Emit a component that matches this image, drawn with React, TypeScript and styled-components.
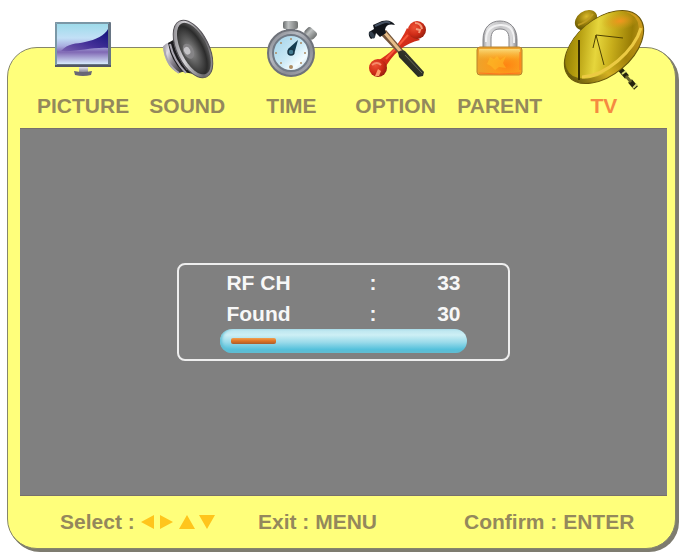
import React from "react";
import styled, { createGlobalStyle } from "styled-components";

const GlobalStyle = createGlobalStyle`
  *, *::before, *::after { box-sizing: border-box; }
  body {
    margin: 0;
    background: #ffffff;
    font-family: "Liberation Sans", Arial, sans-serif;
    font-size: 21px;
    line-height: 24px;
    font-weight: 700;
    color: #94885c;
  }
`;

const Page = styled.div`
  display: flex;
  flex-direction: column;
  min-height: 100vh;
  padding: 47px 9px 5px 7px;
`;

const Panel = styled.main`
  flex: 1;
  display: flex;
  flex-direction: column;
  padding: 0 8px 0 12px;
  border: 1px solid #86866a;
  border-radius: 30px;
  background: #ffff7b;
  box-shadow: 1px 1px 0 #7e7c70, 2px 2px 0 #7e7c70, 3px 3px 0 #7e7c70;
`;

const Tabs = styled.nav`
  display: grid;
  grid-template-columns: repeat(6, 1fr);
  margin-top: -48px;
  padding: 0 11px 10px;
`;

const Tab = styled.button<{ $active?: boolean }>`
  display: flex;
  flex-direction: column;
  align-items: center;
  min-width: 0;
  padding: 0;
  border: 0;
  background: none;
  font: inherit;
  color: ${({ $active }) => ($active ? "#f58a42" : "inherit")};
  cursor: pointer;
`;

const Icon = styled.svg`
  display: block;
  width: 104px;
  height: 94px;
`;

const Screen = styled.section`
  flex: 1;
  display: flex;
  align-items: center;
  justify-content: center;
  padding: 16px;
  background: #808080;
  box-shadow: inset 0 1px 0 #77706c, inset 0 -1px 0 #77706c;
`;

const ScanBox = styled.div`
  width: 54%;
  min-width: 300px;
  max-width: 333px;
  padding: 2px 41px 6px;
  border: 2px solid #eeeeee;
  border-radius: 8px;
  color: #f7f7f7;
`;

const ScanTable = styled.table`
  width: 100%;
  border-collapse: collapse;
  table-layout: fixed;
`;

const Name = styled.th`
  width: 56%;
  height: 31px;
  padding: 0 0 0 6px;
  text-align: left;
`;

const Colon = styled.td`
  width: 12%;
  padding: 0;
  text-align: center;
`;

const Value = styled.td`
  padding: 0 6px 0 0;
  text-align: right;
`;

const Track = styled.div`
  display: flex;
  align-items: center;
  height: 24px;
  padding: 0 11px;
  border-radius: 12px;
  background: linear-gradient(#b9e4ee, #cdeff5 25%, #9adbea 55%, #55c1dc 85%, #62b9ce);
  box-shadow: inset 2px -1px 3px #5fbed4;
`;

const Fill = styled.div`
  height: 6px;
  border-radius: 2px;
  background: linear-gradient(#f0a052, #df7424 50%, #a95d2c);
`;

const Hints = styled.footer`
  display: grid;
  grid-template-columns: 198fr 206fr 203fr;
  padding: 14px 0 14px 40px;
`;

const Hint = styled.div`
  display: flex;
  align-items: center;
  gap: 6px;
  white-space: nowrap;
`;

const Arrows = styled.svg`
  width: 74px;
  height: 16px;
`;

const PictureIcon = () => (
  <Icon viewBox="31 0 104 94" aria-hidden="true">
    <defs>
      <linearGradient id="lcd" x1="0" y1="0" x2="0" y2="1">
        <stop offset="0" stopColor="#9edbea" />
        <stop offset=".35" stopColor="#c2e0f6" />
        <stop offset=".55" stopColor="#a9aee0" />
        <stop offset=".7" stopColor="#8068b4" />
        <stop offset="1" stopColor="#d8eafc" />
      </linearGradient>
      <linearGradient id="wave" x1="0" y1="1" x2="1" y2="0">
        <stop offset="0" stopColor="#7a62b0" />
        <stop offset=".45" stopColor="#443098" />
        <stop offset="1" stopColor="#11127c" />
      </linearGradient>
      <linearGradient id="stand" x1="0" y1="0" x2="0" y2="1">
        <stop offset="0" stopColor="#e5e3ec" />
        <stop offset="1" stopColor="#8c8a98" />
      </linearGradient>
    </defs>
    <path d="M79 67h9v5h-9z" fill="url(#stand)" />
    <path d="M74 71q9 2 18 0l-1 4q-8 2-16 0z" fill="#696775" />
    <rect x="55" y="22" width="56" height="45" rx="1" fill="#677584" />
    <rect x="57" y="24" width="51" height="40" fill="url(#lcd)" />
    <path d="M61 51C68 43 76 44 85 42C96 40 105 35 108 29V48C92 47 78 52 61 51Z" fill="url(#wave)" />
    <path d="M56 65V23H109" fill="none" stroke="#8fbbc9" />
    <path d="M55 66H111" stroke="#535664" strokeWidth="2" />
  </Icon>
);

const SoundIcon = () => (
  <Icon viewBox="135 0 104 94" aria-hidden="true">
    <defs>
      <linearGradient id="magnet" x1="0" y1="0" x2="1" y2=".6">
        <stop offset="0" stopColor="#8c8892" />
        <stop offset=".3" stopColor="#dedbe3" />
        <stop offset=".6" stopColor="#89848e" />
        <stop offset="1" stopColor="#3b393e" />
      </linearGradient>
      <radialGradient id="cone" cx=".35" cy=".52" r=".6">
        <stop offset="0" stopColor="#8f8f8f" />
        <stop offset=".45" stopColor="#565656" />
        <stop offset=".8" stopColor="#2b2b2b" />
        <stop offset="1" stopColor="#4e4e4e" />
      </radialGradient>
      <linearGradient id="rim" x1="0" y1="0" x2="1" y2="1">
        <stop offset="0" stopColor="#67656a" />
        <stop offset=".35" stopColor="#d5d3d7" />
        <stop offset=".7" stopColor="#68676a" />
        <stop offset="1" stopColor="#b5b3b8" />
      </linearGradient>
    </defs>
    <path d="M163 47q2-4 8-5l14 29-6 2q-14-6-16-26z" fill="url(#magnet)" />
    <path d="M168 43l7-4 19 35-11-2q-12-11-15-29z" fill="#1c1b1e" />
    <path d="M164 46q1 18 15 27M170 44q4 17 16 29" fill="none" stroke="#aaa6b0" strokeWidth="2" />
    <path d="M174 43q3 14 13 27" fill="none" stroke="#6b6870" />
    <g transform="rotate(-26 193 49)">
      <ellipse cx="193" cy="49" rx="16" ry="31" fill="url(#rim)" stroke="#555257" />
      <ellipse cx="194" cy="49" rx="13" ry="28" fill="url(#cone)" />
      <ellipse cx="188" cy="49" rx="5" ry="8" fill="#858486" />
      <ellipse cx="187" cy="48" rx="3" ry="4" fill="#c4c3c6" />
    </g>
  </Icon>
);

const TimeIcon = () => (
  <Icon viewBox="239 0 104 94" aria-hidden="true">
    <defs>
      <linearGradient id="steel" x1="0" y1="0" x2="1" y2="1">
        <stop offset="0" stopColor="#777981" />
        <stop offset=".35" stopColor="#b6b9c0" />
        <stop offset=".65" stopColor="#8a8d96" />
        <stop offset="1" stopColor="#b2b3ba" />
      </linearGradient>
      <linearGradient id="dial" x1="0" y1="0" x2="1" y2="1">
        <stop offset="0" stopColor="#9fd0e8" />
        <stop offset=".5" stopColor="#c9e8f5" />
        <stop offset=".75" stopColor="#f3fcff" />
        <stop offset="1" stopColor="#accfdf" />
      </linearGradient>
      <linearGradient id="crown" x1="0" y1="0" x2="1" y2="0">
        <stop offset="0" stopColor="#686b6c" />
        <stop offset=".35" stopColor="#bec1c1" />
        <stop offset="1" stopColor="#707372" />
      </linearGradient>
    </defs>
    <rect x="286" y="27" width="9" height="7" fill="#7b7e82" />
    <rect x="283" y="21" width="15" height="8" rx="2" fill="url(#crown)" />
    <path d="M302 39l5-7 4 5-6 6z" fill="#8b8f94" />
    <rect x="305" y="29" width="12" height="9" rx="3" transform="rotate(43 311 33)" fill="url(#crown)" />
    <circle cx="291" cy="53" r="23" fill="url(#steel)" stroke="#6f727a" strokeWidth="2" />
    <circle cx="291" cy="53" r="18" fill="url(#dial)" stroke="#717a86" strokeWidth="2" />
    <g fill="#ad8d65">
      <circle cx="291" cy="39" r="1" /><circle cx="305" cy="53" r="1" />
      <circle cx="291" cy="67" r="2" /><circle cx="276" cy="53" r="1" />
      <circle cx="281" cy="43" r="1" /><circle cx="281" cy="63" r="1" />
      <circle cx="301" cy="63" r="1" /><circle cx="301" cy="43" r="1" />
    </g>
    <path d="M288 49L298 40 295 51 291 55z" fill="#143d51" />
    <circle cx="291" cy="52" r="3" fill="#437b91" stroke="#173647" strokeWidth="1.5" />
  </Icon>
);

const OptionIcon = () => (
  <Icon viewBox="343 0 104 94" aria-hidden="true">
    <defs>
      <linearGradient id="wrench" x1="0" y1="0" x2="1" y2="1">
        <stop offset="0" stopColor="#f0452b" />
        <stop offset=".5" stopColor="#d42d19" />
        <stop offset="1" stopColor="#a5200f" />
      </linearGradient>
      <radialGradient id="knob" cx=".35" cy=".35" r=".7">
        <stop offset="0" stopColor="#ee5234" />
        <stop offset=".6" stopColor="#cf2c17" />
        <stop offset="1" stopColor="#96200f" />
      </radialGradient>
      <linearGradient id="grip" x1="0" y1="1" x2="1" y2="0">
        <stop offset="0" stopColor="#191b14" />
        <stop offset=".6" stopColor="#33352a" />
        <stop offset="1" stopColor="#77755b" />
      </linearGradient>
    </defs>
    <path d="M376 61C388 55 399 44 406 28L419 40C404 43 391 54 383 70Z" fill="url(#wrench)" />
    <circle cx="416" cy="30" r="9" fill="url(#knob)" />
    <circle cx="377" cy="68" r="9" fill="url(#knob)" />
    <path d="M407 35L385 59" stroke="#f8583a" strokeWidth="2" />
    <path d="M414 23q6 0 7 6M415 29l4 1-1 3" fill="none" stroke="#f49a7a" strokeWidth="2" />
    <path d="M371 65q5-4 9 0" fill="none" stroke="#f58a69" strokeWidth="2" />
    <path d="M377 69l3 2-2 5h-4z" fill="#ff9c69" />
    <path d="M379 34l6-4 18 21-4 4z" fill="#74553a" />
    <path d="M384 33l17 20" stroke="#e6bd88" strokeWidth="3" />
    <path d="M397 52q4-3 7-1l19 21-1 4-5 1-19-20z" fill="url(#grip)" />
    <path d="M404 55l17 18" stroke="#6b6c57" />
    <path d="M368 32l5-3-1-4 9-4q9-2 13 4-9-2-10 5l1 3-6 4-4-4-1 4-4 2q-3-3-2-7z" fill="#11151b" />
    <path d="M374 26l7-3q5-2 8 0" fill="none" stroke="#465263" strokeWidth="2" />
    <ellipse cx="371" cy="35" rx="2" ry="4" transform="rotate(-35 371 35)" fill="#34404d" />
  </Icon>
);

const ParentIcon = () => (
  <Icon viewBox="448 0 104 94" aria-hidden="true">
    <defs>
      <linearGradient id="shackle" x1="0" y1="0" x2="1" y2="0">
        <stop offset="0" stopColor="#9a9a9d" />
        <stop offset=".12" stopColor="#dededf" />
        <stop offset=".5" stopColor="#c4c4c6" />
        <stop offset=".85" stopColor="#d8d8da" />
        <stop offset="1" stopColor="#858589" />
      </linearGradient>
      <radialGradient id="lock" cx=".65" cy=".65" r=".65">
        <stop offset="0" stopColor="#ff8412" />
        <stop offset=".5" stopColor="#fb9c1c" />
        <stop offset="1" stopColor="#eda32c" />
      </radialGradient>
      <linearGradient id="shine" x1="0" y1="0" x2="0" y2="1">
        <stop offset="0" stopColor="#fbe083" stopOpacity=".9" />
        <stop offset="1" stopColor="#ffbd36" stopOpacity="0" />
      </linearGradient>
    </defs>
    <path fillRule="evenodd" d="M483 48V40C483 28 490 21 500 21S517 28 517 40V48H509V39C509 32 506 29 500 29S491 32 491 39V48Z" fill="url(#shackle)" stroke="#858589" />
    <path d="M486 42V38q1-12 14-13t14 13v5" fill="none" stroke="#f1f1f2" strokeWidth="2" />
    <rect x="477" y="47" width="45" height="28" rx="3" fill="url(#lock)" stroke="#b9822d" />
    <rect x="479" y="49" width="41" height="11" rx="1" fill="url(#shine)" />
    <path d="M479 73q20 2 41 0M520 52v18" fill="none" stroke="#ff7720" />
    <path d="M487 64l3-7 4 2 3-3 3 4 6-4-3 7 3 5-7-1-4 3-4-4z" fill="#ffc52b" opacity=".45" />
  </Icon>
);

const TvIcon = () => (
  <Icon viewBox="552 0 104 94" aria-hidden="true">
    <defs>
      <linearGradient id="dish" x1="0" y1=".2" x2="1" y2=".8">
        <stop offset="0" stopColor="#857400" />
        <stop offset=".2" stopColor="#b39b0e" />
        <stop offset=".43" stopColor="#e6d63c" />
        <stop offset=".62" stopColor="#c8ae1b" />
        <stop offset=".85" stopColor="#997d05" />
        <stop offset="1" stopColor="#bd971b" />
      </linearGradient>
      <linearGradient id="edge" x1="0" y1="0" x2="1" y2="0">
        <stop offset="0" stopColor="#65580a" />
        <stop offset=".35" stopColor="#d4b022" />
        <stop offset=".6" stopColor="#a38209" />
        <stop offset="1" stopColor="#cf9c1e" />
      </linearGradient>
      <radialGradient id="ball" cx=".6" cy=".35" r=".7">
        <stop offset="0" stopColor="#dab92c" />
        <stop offset=".5" stopColor="#9c810c" />
        <stop offset="1" stopColor="#5c5103" />
      </radialGradient>
      <radialGradient id="glow">
        <stop offset="0" stopColor="#f3941f" />
        <stop offset="1" stopColor="#d2a419" stopOpacity="0" />
      </radialGradient>
    </defs>
    <path d="M620 69l7 8M630 81l6 7" stroke="#24230d" strokeWidth="5" />
    <path d="M626 76l5 6" stroke="#69662b" strokeWidth="3" />
    <path d="M622 74l4-3M633 88l4-4" stroke="#d9dc70" strokeWidth="2" />
    <ellipse cx="586" cy="20" rx="12" ry="9" transform="rotate(-35 586 20)" fill="url(#ball)" />
    <path d="M578 25q8-2 15-11" fill="none" stroke="#c09d21" strokeWidth="2" />
    <ellipse cx="604" cy="47" rx="46" ry="28" transform="rotate(-40 604 47)" fill="url(#edge)" stroke="#695709" />
    <ellipse cx="602" cy="45" rx="43" ry="25" transform="rotate(-40 602 45)" fill="url(#dish)" />
    <ellipse cx="620" cy="21" rx="19" ry="9" transform="rotate(-8 620 21)" fill="url(#glow)" />
    <path d="M582 77C606 76 634 51 641 28" fill="none" stroke="#ecca43" strokeWidth="3" />
    <path d="M579 40V80" stroke="#352d00" strokeWidth="2" />
    <path d="M593 48L596 35 623 38M596 35L604 65" fill="none" stroke="#514302" />
  </Icon>
);

const tabs = [
  { label: "PICTURE", Art: PictureIcon },
  { label: "SOUND", Art: SoundIcon },
  { label: "TIME", Art: TimeIcon },
  { label: "OPTION", Art: OptionIcon },
  { label: "PARENT", Art: ParentIcon },
  { label: "TV", Art: TvIcon, active: true },
];

const rows = [
  { name: "RF CH", value: 33 },
  { name: "Found", value: 30 },
];

const progress = 20;

export default function App() {
  return (
    <>
      <GlobalStyle />
      <Page>
        <Panel>
          <Tabs>
            {tabs.map(({ label, Art, active }) => (
              <Tab key={label} type="button" $active={active} aria-current={active ? "page" : undefined}>
                <Art />
                {label}
              </Tab>
            ))}
          </Tabs>
          <Screen>
            <ScanBox>
              <ScanTable>
                <tbody>
                  {rows.map(({ name, value }) => (
                    <tr key={name}>
                      <Name scope="row">{name}</Name>
                      <Colon>:</Colon>
                      <Value>{value}</Value>
                    </tr>
                  ))}
                </tbody>
              </ScanTable>
              <Track role="progressbar" aria-label="Channel scan" aria-valuenow={progress} aria-valuemin={0} aria-valuemax={100}>
                <Fill style={{ width: `${progress}%` }} />
              </Track>
            </ScanBox>
          </Screen>
          <Hints>
            <Hint>
              Select :
              <Arrows viewBox="0 0 74 16" role="img" aria-label="Arrow keys">
                <path d="M0 8L13 1V15ZM32 8L19 1V15ZM38 15L46 1 54 15ZM58 1H74L66 15Z" fill="#ffc51c" />
              </Arrows>
            </Hint>
            <Hint>Exit : MENU</Hint>
            <Hint>Confirm : ENTER</Hint>
          </Hints>
        </Panel>
      </Page>
    </>
  );
}
